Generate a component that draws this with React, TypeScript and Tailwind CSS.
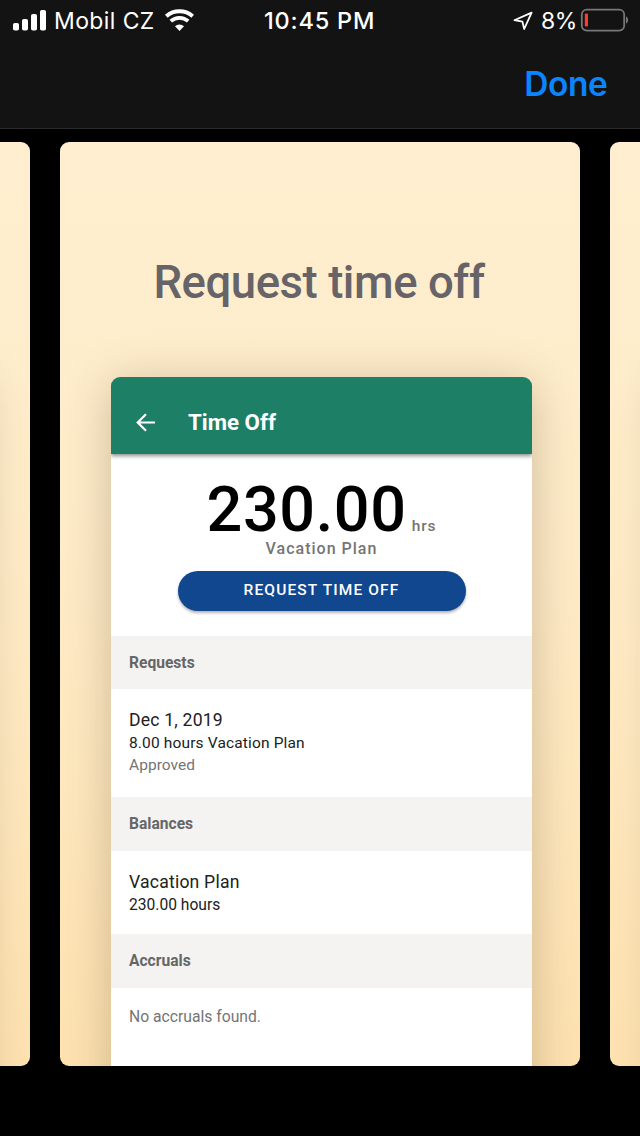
import type { ReactNode } from "react";

function StatusBar() {
  return (
    <div className="grid h-10 grid-cols-[264px_1fr_127px] text-[23.5px] leading-[38px] text-white">
      <div className="flex h-10 items-center pl-[13px]">
        <svg className="-mt-px" width="33" height="22" viewBox="0 0 33 22" fill="currentColor">
          <rect x="0" y="14" width="6" height="7.5" rx="1.8" />
          <rect x="9" y="10" width="6" height="11.5" rx="1.8" />
          <rect x="18" y="5" width="6" height="16.5" rx="1.8" />
          <rect x="27" y="1" width="6" height="20.5" rx="1.8" />
        </svg>
        <span className="ml-[8px] w-[101px] pt-[2px] text-[23px] font-normal whitespace-nowrap tracking-[0.4px]">Mobil CZ</span>
        <svg className="ml-[9px]" width="32" height="24" viewBox="0 0 32 24" fill="none" stroke="currentColor">
          <path d="M2.3 8.2A20 20 0 0 1 28.7 8.2" strokeWidth="4" />
          <path d="M6.8 13.2A13 13 0 0 1 24.2 13.2" strokeWidth="3.8" />
          <path d="M15.5 23L11 18.2A6.5 6.5 0 0 1 20 18.2Z" fill="currentColor" stroke="none" />
        </svg>
      </div>
      <div className="pt-[2px] font-medium tracking-[0.8px] whitespace-nowrap">10:45 PM</div>
      <div className="flex h-10 items-center">
        <svg width="20" height="20" viewBox="0 0 20 20" fill="none" stroke="currentColor" strokeWidth="1.8" strokeLinejoin="round">
          <path d="M1.4 10.2L18.6 2.6L11.2 19L9.4 11.6Z" />
        </svg>
        <span className="ml-[8px] w-[35px] pt-[2px] text-[23px] font-normal whitespace-nowrap tracking-[-0.5px]">8%</span>
        <svg className="-mt-px ml-[4px]" width="49" height="24" viewBox="0 0 49 24">
          <rect x="1.8" y="1.6" width="42.4" height="21" rx="5" fill="none" stroke="#777777" strokeWidth="1.8" />
          <rect x="4.8" y="5.5" width="3.2" height="13" rx="1" fill="#ff3b30" />
          <path d="M46 8.2Q48.2 9.6 48.2 12Q48.2 14.4 46 15.8Z" fill="#777777" />
        </svg>
      </div>
    </div>
  );
}

function Panel({ children }: { children?: ReactNode }) {
  return (
    <section className="flex h-[924px] w-[520px] shrink-0 flex-col overflow-hidden rounded-[9px] bg-linear-to-b from-[#ffefd0] via-[#feebc6] to-[#fee2b0] font-['Roboto',sans-serif]">
      {children}
    </section>
  );
}

function Device({ children }: { children?: ReactNode }) {
  return (
    <div className="ml-[51px] flex h-[760px] w-[421px] shrink-0 flex-col overflow-hidden rounded-t-[9px] bg-white shadow-[0_6px_46px_rgba(90,70,45,0.3)]">
      {children}
    </div>
  );
}

function Band({ label, className }: { label: string; className: string }) {
  return (
    <h3 className={`flex shrink-0 items-center bg-[#f4f3f2] pt-[2px] pl-[18px] text-[15.6px] font-bold text-[#666666] ${className}`}>
      {label}
    </h3>
  );
}

export default function App() {
  return (
    <main className="flex h-[1136px] w-[640px] flex-col overflow-hidden bg-black font-['Inter',sans-serif]">
      <header className="h-[129px] shrink-0 border-b border-[#2b2b2c] bg-[#131313]">
        <StatusBar />
        <div className="flex h-[88px] items-center justify-end pr-[32.5px]">
          <button className="text-[33.5px] leading-[40px] font-semibold tracking-[-0.4px] text-[#0b84ff]">Done</button>
        </div>
      </header>
      <div className="mt-[13px] -ml-[490px] flex w-[1620px] shrink-0 gap-[30px]">
        <Panel>
          <div className="h-[235px] shrink-0" />
          <Device />
        </Panel>
        <Panel>
          <h1 className="h-[235px] shrink-0 pt-[113px] pr-[2px] text-center text-[45.5px] leading-[56px] font-medium tracking-[-0.45px] text-[#666468]">
            Request time off
          </h1>
          <Device>
            <div className="z-10 flex h-[77px] shrink-0 items-center bg-[#1d8066] pt-[14px] pl-[24.5px] text-white shadow-[0_2px_4px_rgba(0,0,0,0.45)]">
              <svg width="20" height="20" viewBox="0 0 20 20" fill="none" stroke="currentColor" strokeWidth="2.2">
                <path d="M19 9.5H2M10 1.2L1.7 9.5L10 17.8" />
              </svg>
              <h2 className="-mt-px ml-[32.5px] text-[22.3px] leading-[26px] font-bold">Time Off</h2>
            </div>
            <div className="flex h-[182px] shrink-0 flex-col items-center pt-[28px]">
              <div className="flex items-baseline whitespace-nowrap text-black">
                <span className="text-[63px] leading-[56px] font-medium tracking-[0.6px]">230.00</span>
                <span className="ml-[5px] text-[15.5px] leading-[20px] font-medium tracking-[0.9px] text-[#757575]">hrs</span>
              </div>
              <div className="mt-px text-[16px] leading-[20px] font-medium tracking-[1px] text-[#757575]">Vacation Plan</div>
              <button className="mt-[12px] h-[40px] w-[288px] rounded-full bg-[#10478f] text-[15.5px] font-medium tracking-[1.13px] text-white shadow-[0_2px_3px_rgba(0,0,0,0.3)]">
                REQUEST TIME OFF
              </button>
            </div>
            <Band label="Requests" className="h-[53px]" />
            <div className="h-[108px] shrink-0 pt-[20px] pl-[18px] text-[15.5px] text-[#212121]">
              <div className="text-[17.6px] leading-[23px] tracking-[0.2px]">Dec 1, 2019</div>
              <div className="leading-[22px] tracking-[0.15px]">8.00 hours Vacation Plan</div>
              <div className="leading-[23px] tracking-[0.05px] text-[#757575]">Approved</div>
            </div>
            <Band label="Balances" className="h-[54px]" />
            <div className="h-[83px] shrink-0 pt-[20px] pl-[18px] text-[15.6px] text-[#212121]">
              <div className="text-[17.6px] leading-[23px] tracking-[0.2px]">Vacation Plan</div>
              <div className="leading-[22px]">230.00 hours</div>
            </div>
            <Band label="Accruals" className="h-[54px]" />
            <div className="pt-[18px] pl-[18px] text-[15.7px] leading-[22px] text-[#757575]">No accruals found.</div>
          </Device>
        </Panel>
        <Panel>
          <div className="h-[235px] shrink-0" />
          <Device />
        </Panel>
      </div>
    </main>
  );
}
